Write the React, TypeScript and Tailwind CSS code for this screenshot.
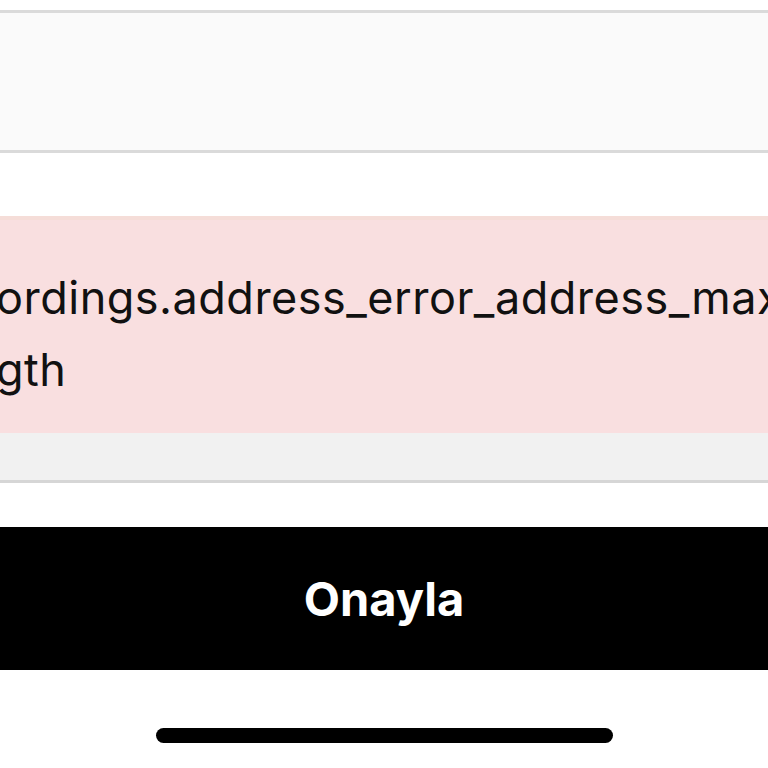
import React from 'react';

const App: React.FC = () => {
  return (
    <div
      className="w-[768px] h-[768px] overflow-hidden bg-white flex flex-col"
      style={{ fontFamily: 'Inter, "Open Sans", "Liberation Sans", sans-serif' }}
    >
      <div className="h-[10px] shrink-0" />
      {/* input field */}
      <div className="h-[143px] shrink-0 border-y-[3px] border-[#dadada] bg-[#fafafa]" />
      <div className="h-[63px] shrink-0" />

      {/* error box */}
      <div className="shrink-0 border-t-4 border-[#f5ddd8] bg-[#f9dfe0] h-[217px] overflow-hidden">
        <div className="pt-[42px] -ml-[4px] text-[45px] leading-[72px] text-[#111] whitespace-nowrap tracking-[0.5px]">
          <div>ordings.address_error_address_max_length</div>
          <div>gth</div>
        </div>
      </div>
      <div className="h-[50px] shrink-0 bg-[#f1f1f1] border-b-[3px] border-[#d6d6d6]" />

      <div className="h-[44px] shrink-0" />

      {/* confirm button */}
      <button className="h-[143px] shrink-0 w-full bg-black text-white text-[47px] font-bold flex items-center justify-center pt-[2px]">
        Onayla
      </button>

      <div className="flex-1 flex justify-center pt-[58px]">
        <div className="w-[457px] h-[15px] rounded-full bg-black" />
      </div>
    </div>
  );
};

export default App;
